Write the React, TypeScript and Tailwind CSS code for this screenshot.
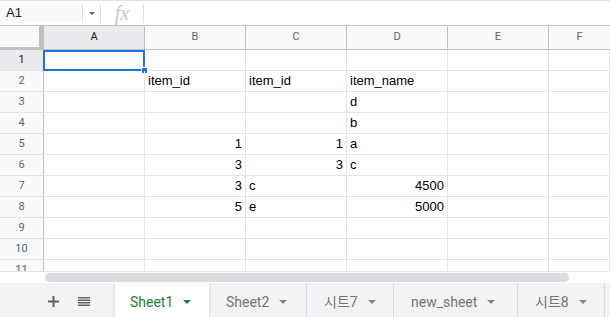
import React from 'react';

type Cell = { v: string; right?: boolean };

const cols = ['A', 'B', 'C', 'D', 'E'];

const rows: Record<number, Record<string, Cell>> = {
  2: { B: { v: 'item_id' }, C: { v: 'item_id' }, D: { v: 'item_name' } },
  3: { D: { v: 'd' } },
  4: { D: { v: 'b' } },
  5: { B: { v: '1', right: true }, C: { v: '1', right: true }, D: { v: 'a' } },
  6: { B: { v: '3', right: true }, C: { v: '3', right: true }, D: { v: 'c' } },
  7: { B: { v: '3', right: true }, C: { v: 'c' }, D: { v: '4500', right: true } },
  8: { B: { v: '5', right: true }, C: { v: 'e' }, D: { v: '5000', right: true } },
};

const tabs = [
  { name: 'Sheet1', w: 'w-[94px]', active: true },
  { name: 'Sheet2', w: 'w-[98px]' },
  { name: '시트7', w: 'w-[87px]' },
  { name: 'new_sheet', w: 'w-[124px]' },
  { name: '시트8', w: 'w-[87px]' },
];

const Caret: React.FC<{ color: string }> = ({ color }) => (
  <svg width="8" height="4" viewBox="0 0 8 4">
    <path d="M0 0 L8 0 L4 4 Z" fill={color} />
  </svg>
);

const GridCell: React.FC<{ cell?: Cell; selected?: boolean; last?: boolean }> = ({ cell, selected, last }) => (
  <div
    className={`relative h-full flex items-end pb-[2px] px-[3px] border-r border-[#e2e3e3] ${
      last ? 'flex-1' : 'w-[101px]'
    } ${cell?.right ? 'justify-end' : ''}`}
  >
    {cell && <span className="leading-[16px]">{cell.v}</span>}
    {selected && (
      <>
        <div className="absolute -left-px top-0 -right-px -bottom-px border-2 border-[#1a73e8]" />
        <div className="absolute -right-[4px] -bottom-[4px] w-[7px] h-[7px] bg-[#1a73e8] border border-white" />
      </>
    )}
  </div>
);

export default function App() {
  return (
    <div className="w-[610px] h-[317px] overflow-hidden bg-white text-black font-['Liberation_Sans',Arial,sans-serif] text-[13px]">
      {/* formula bar */}
      <div className="h-[26px] flex items-center border-t border-b border-t-[#e0e0e0] border-b-[#c0c0c0]">
        <div className="w-[83px] h-[19px] bg-[#f8f9fa] border-r border-[#e0e0e0] flex items-center pl-[6px] text-[13px] text-[#202124]">
          A1
        </div>
        <div className="w-[18px] h-[19px] border-r border-[#e0e0e0] flex items-center justify-center">
          <svg width="6" height="3" viewBox="0 0 6 3">
            <path d="M0 0 L6 0 L3 3 Z" fill="#5f6368" />
          </svg>
        </div>
        <div className="w-[43px] h-[19px] border-r border-[#e0e0e0] flex items-center justify-center font-['Liberation_Serif',serif] italic text-[20px] text-[#c4c7c5] leading-none">
          fx
        </div>
      </div>

      {/* column header */}
      <div className="h-[24px] flex font-['Roboto',Arial,sans-serif] text-[11px] text-[#5f6368]">
        <div className="w-[44px] h-full bg-[#f8f9fa] border-r-[5px] border-b-[3px] border-[#c0c0c0]" />
        {cols.map((c) => (
          <div
            key={c}
            className={`w-[101px] h-full flex items-center justify-center border-r border-b border-[#c0c0c0] ${
              c === 'A' ? 'bg-[#e8eaed] text-[#202124]' : 'bg-[#f8f9fa]'
            }`}
          >
            {c}
          </div>
        ))}
        <div className="flex-1 h-full flex items-center justify-center bg-[#f8f9fa] border-b border-[#c0c0c0]">F</div>
      </div>

      {/* rows */}
      <div className="h-[221px] overflow-hidden">
        {Array.from({ length: 11 }, (_, i) => i + 1).map((r) => (
          <div key={r} className="h-[21px] flex border-b border-[#e2e3e3]">
            <div
              className={`w-[44px] h-full flex items-center justify-center border-r border-r-[#c0c0c0] font-['Roboto',Arial,sans-serif] text-[11px] ${
                r === 1 ? 'bg-[#e8eaed] text-[#202124]' : 'bg-[#f8f9fa] text-[#5f6368]'
              }`}
            >
              {r}
            </div>
            {cols.map((c) => (
              <GridCell key={c} cell={rows[r]?.[c]} selected={r === 1 && c === 'A'} />
            ))}
            <GridCell last />
          </div>
        ))}
      </div>

      {/* horizontal scrollbar */}
      <div className="h-[12px] border-t border-[#e2e3e3] pl-[45px] pt-px">
        <div className="w-[524px] h-[9px] rounded-full bg-[#dadce0]" />
      </div>

      {/* sheet tabs */}
      <div className="h-[34px] flex bg-[#f1f3f4] font-['Roboto','Noto_Sans_CJK_KR',sans-serif] text-[14px]">
        <div className="w-[115px] flex items-center pl-[48px] gap-[19px] pt-[3px]">
          <svg width="11" height="11" viewBox="0 0 11 11">
            <path d="M5.5 0 V11 M0 5.5 H11" stroke="#5f6368" strokeWidth="2" />
          </svg>
          <svg width="12" height="9" viewBox="0 0 12 9">
            <rect x="0" y="0" width="12" height="1.5" fill="#5f6368" />
            <rect x="0" y="2.5" width="12" height="1.5" fill="#5f6368" />
            <rect x="0" y="5" width="12" height="1.5" fill="#5f6368" />
            <rect x="0" y="7.5" width="12" height="1.5" fill="#5f6368" />
          </svg>
        </div>
        {tabs.map((t) => (
          <div
            key={t.name}
            className={`${t.w} h-full flex items-center pt-[4px] ${
              t.active
                ? 'bg-white pl-[15px] text-[#188038] shadow-[0_1px_3px_rgba(60,64,67,0.2)]'
                : 'pl-[17px] text-[#70757a] border-r border-[#dadce0]'
            }`}
          >
            <span>{t.name}</span>
            <span className="ml-[10px] flex items-center">
              <Caret color={t.active ? '#188038' : '#80868b'} />
            </span>
          </div>
        ))}
      </div>
    </div>
  );
}
